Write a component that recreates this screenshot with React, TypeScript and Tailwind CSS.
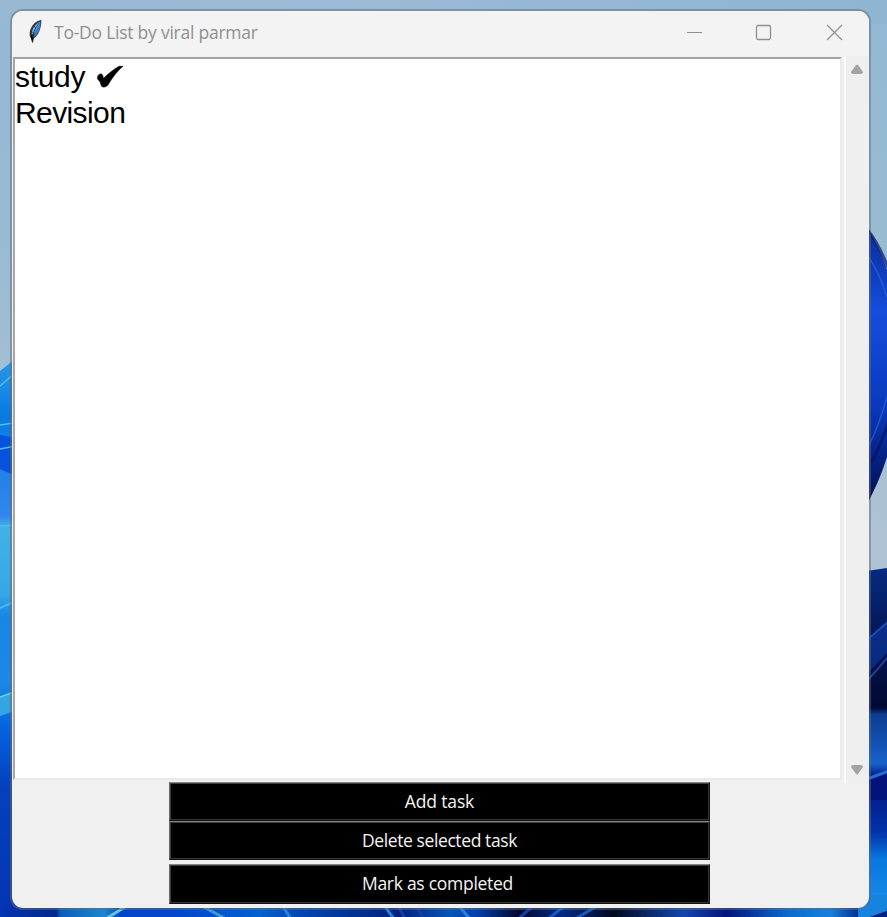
import React from "react";

function Wallpaper() {
  return (
    <svg className="absolute inset-0 h-[917px] w-[887px]" viewBox="0 0 887 917" preserveAspectRatio="none" aria-hidden="true">
      <defs>
        <linearGradient id="sky" x1="0" y1="0" x2="0" y2="1">
          <stop offset="0" stopColor="#94b9d4" />
          <stop offset="0.25" stopColor="#98bbd2" />
          <stop offset="0.6" stopColor="#afc3d4" />
        </linearGradient>
        <linearGradient id="topSky" x1="0" y1="0" x2="1" y2="0">
          <stop offset="0" stopColor="#98b9d3" />
          <stop offset="0.4" stopColor="#9bbad6" />
          <stop offset="1" stopColor="#8fb5d1" />
        </linearGradient>
        <linearGradient id="leftBase" x1="0" y1="360" x2="0" y2="917" gradientUnits="userSpaceOnUse">
          <stop offset="0" stopColor="#2a98e8" />
          <stop offset="0.1" stopColor="#087be0" />
          <stop offset="0.28" stopColor="#3287ec" />
          <stop offset="0.3" stopColor="#41b2e7" />
          <stop offset="0.42" stopColor="#37a7e5" />
          <stop offset="0.46" stopColor="#1986e5" />
          <stop offset="0.58" stopColor="#1d87e5" />
          <stop offset="0.66" stopColor="#0562df" />
          <stop offset="0.77" stopColor="#0440bd" />
          <stop offset="1" stopColor="#0434b2" />
        </linearGradient>
        <linearGradient id="rightPetal" x1="0" y1="230" x2="0" y2="502" gradientUnits="userSpaceOnUse">
          <stop offset="0" stopColor="#0a2c99" />
          <stop offset="0.3" stopColor="#154ddc" />
          <stop offset="0.65" stopColor="#0a39bd" />
          <stop offset="1" stopColor="#020d51" />
        </linearGradient>
        <linearGradient id="rightBase" x1="0" y1="568" x2="0" y2="917" gradientUnits="userSpaceOnUse">
          <stop offset="0" stopColor="#062b80" />
          <stop offset="0.22" stopColor="#041451" />
          <stop offset="0.4" stopColor="#020a32" />
          <stop offset="0.42" stopColor="#0c3d91" />
          <stop offset="0.56" stopColor="#1862ca" />
          <stop offset="0.6" stopColor="#02127b" />
          <stop offset="0.76" stopColor="#0334ab" />
          <stop offset="0.83" stopColor="#0876de" />
          <stop offset="0.94" stopColor="#1688e7" />
          <stop offset="1" stopColor="#04196d" />
        </linearGradient>
        <linearGradient id="bottom" x1="0" y1="0" x2="1" y2="0">
          <stop offset="0" stopColor="#0434b2" />
          <stop offset="0.065" stopColor="#03288c" />
          <stop offset="0.07" stopColor="#0c5dbb" />
          <stop offset="0.12" stopColor="#1b87cf" />
          <stop offset="0.14" stopColor="#0445c8" />
          <stop offset="0.2" stopColor="#0446cc" />
          <stop offset="0.3" stopColor="#0560d0" />
          <stop offset="0.35" stopColor="#0345b0" />
          <stop offset="0.46" stopColor="#03217e" />
          <stop offset="0.52" stopColor="#0655b8" />
          <stop offset="0.55" stopColor="#0340ae" />
          <stop offset="0.6" stopColor="#02092d" />
          <stop offset="0.65" stopColor="#052a84" />
          <stop offset="0.71" stopColor="#02091f" />
          <stop offset="0.79" stopColor="#1446ae" />
          <stop offset="0.84" stopColor="#03147b" />
          <stop offset="0.91" stopColor="#0d6ace" />
          <stop offset="0.96" stopColor="#1481db" />
          <stop offset="1" stopColor="#041d80" />
        </linearGradient>
      </defs>
      <path fill="url(#sky)" d="M0 0h887v917H0z" />
      <path fill="url(#topSky)" d="M0 0h887v24H0z" />
      <path fill="url(#leftBase)" d="M0 371 20 355V917H0z" />
      <path fill="#0652dd" d="M0 435 20 439V478L0 469z" />
      <path fill="none" stroke="#51bdec" strokeWidth="1.5" d="M0 386 16 372M0 425 20 422M0 449 20 445M0 526 20 525M0 608 20 599" />
      <path fill="#35a5e2" d="M0 697 20 690V709L0 716z" />
      <path stroke="#66d2e9" strokeWidth="1.5" d="M0 697 20 690" />
      <path fill="url(#rightPetal)" d="M862 218Q878 243 887 270V457Q878 486 862 513z" />
      <path fill="none" stroke="#2966dc" strokeOpacity=".7" strokeWidth="1.5" d="M865 252Q880 272 889 303M868 447Q879 427 889 390" />
      <path fill="none" stroke="#041565" strokeOpacity=".7" strokeWidth="3" d="M869 466Q880 447 889 421M867 229Q879 244 889 270" />
      <path fill="url(#rightBase)" d="M860 572 887 568V917H860z" />
      <path fill="#0d369c" fillOpacity=".7" d="M867 639 887 622V653L867 674z" />
      <path fill="none" stroke="#2a62ca" strokeOpacity=".6" strokeWidth="2" d="M868 639 889 621M868 680 889 656" />
      <path fill="#02127b" d="M867 779 887 772V800H867z" />
      <path fill="none" stroke="#226ed6" strokeWidth="3" d="M867 779 889 771" />
      <path fill="url(#bottom)" d="M0 907h865v10H0z" />
      <g fill="none" strokeWidth="3">
        <path stroke="#66c3d4" d="m107 918 18-11" />
        <path stroke="#3f9bd4" d="m202 906 24 13" />
        <path stroke="#2583dc" d="m282 905 9 14M384 905l10 14M458 905l12 14" />
        <path stroke="#173caa" d="m398 905 7 14M416 905l8 14M518 919l14-12" />
        <path stroke="#1558c0" d="m548 919 18-14M575 919l22-13" />
      </g>
      <path fill="#1683df" d="M858 895h29v16l-17 6h-12z" />
      <path fill="#03227f" d="m887 911-17 6h17z" />
    </svg>
  );
}

function Feather() {
  return (
    <svg className="h-[25px] w-[18px] shrink-0" viewBox="0 0 18 25" aria-hidden="true">
      <path d="M15.4 1.1C9.4 1.6 4.6 7.5 3.7 13.2c-.4 2.9.2 5 1.6 6.2L6 23.8l1-.1.8-4.3c4.4-2.6 7.6-9.4 7.6-18.3z" fill="#343a42" />
      <path d="M13.8 2.7C9.9 4.5 7.2 8.1 6.1 12.2l-.3 3.4c4.6-3 7.4-6.4 8-12.9z" fill="#76aeea" />
      <path d="M14.5 3c-.2 6.5-2 11.3-6.3 15l.5-5.5z" fill="#3c7fd2" />
      <path d="M12.8 4.3C9.9 8.4 7.3 12.4 6.4 19.5M5 12l1.5 1.6M8 7l1.4 1.6" fill="none" stroke="#1a2838" strokeWidth=".8" />
      <path d="M5 15v4.5l1.2 2.7 1.3-3" fill="#080808" />
    </svg>
  );
}

function TitleBar() {
  return (
    <header className="flex h-[45px] shrink-0 bg-[#f3f3f3] text-[#8f8f8f]">
      <div className="flex flex-1 items-start pl-[14px] pt-2">
        <Feather />
        <h1 className="ml-[10px] whitespace-nowrap font-['Open_Sans',sans-serif] text-[17.5px] leading-[27px] tracking-[-0.24px]">To-Do List by viral parmar</h1>
      </div>
      <svg className="h-[45px] w-[188px] shrink-0" viewBox="0 0 188 45" fill="none" stroke="#8f8f8f" aria-hidden="true">
        <path d="M6 21.5h15" />
        <rect x="75.5" y="14.5" width="14" height="14" rx="1.7" strokeWidth="1.3" />
        <path d="m146 14 15 15m0-15-15 15" strokeWidth="1.2" />
      </svg>
    </header>
  );
}

function TaskList() {
  return (
    <div className="h-[723px] w-[829px] shrink-0 border-2 border-t-[#a3a3a3] border-r-[#eaeaea] border-b-[#eaeaea] border-l-[#aaa6aa] bg-white text-black">
      <ul className="font-['Liberation_Sans',Arial,sans-serif] text-[30px] leading-[36px]">
        <li className="flex h-9 items-start">
          <span className="w-[71px] tracking-[-0.3px]">study</span>
          <svg className="ml-[11px] h-9 w-[27px] shrink-0" viewBox="0 0 27 36" role="img" aria-label="completed">
            <path d="M.5 18.8C.5 16.2 2.3 14.7 4 14.9c1.8.2 2 2.2 2.4 4.7C10.5 15 16.5 10.5 22 7.3h4c-5 4-11 11.8-14.3 17.5-1.2 2.3-3 3.3-5.3 3.3-2 0-2.3-1.7-3.1-4.6C2.2 20.8.5 21.3.5 18.8z" fill="#000" stroke="#000" strokeWidth=".6" />
          </svg>
        </li>
        <li className="h-9 tracking-[-0.6px]">Revision</li>
      </ul>
    </div>
  );
}

function Scrollbar() {
  return (
    <div className="flex h-[727px] w-[27px] shrink-0 flex-col items-center justify-between border-l-2 border-[#fafafa] bg-[#efefef] pt-[8px] pr-[3px] pb-[8px]">
      <svg className="h-[11px] w-3" viewBox="0 0 12 11" fill="#a3a3a3"><path d="M5 1q1-1 2 0l5 7q0 2-2 2H2q-2 0-2-2z" /></svg>
      <svg className="h-[11px] w-3" viewBox="0 0 12 11" fill="#a3a3a3"><path d="M5 10q1 1 2 0l5-7q0-2-2-2H2Q0 1 0 3z" /></svg>
    </div>
  );
}

function TaskButton({ children, className }: { children: string; className: string }) {
  return (
    <button className={"flex w-[541px] items-center justify-center whitespace-nowrap border border-t-[#858585] border-r-[#151515] border-b-[#111] border-l-[#686868] bg-black pb-[2px] font-['Open_Sans',sans-serif] text-[17.5px] leading-6 text-[#f4f4f4] shadow-[inset_1px_1px_0_#3d3d3d,inset_-1px_-1px_0_#333] " + className}>
      {children}
    </button>
  );
}

export default function App() {
  return (
    <main className="relative h-[917px] w-[887px] overflow-hidden">
      <Wallpaper />
      <div className="relative px-[10px] pt-[9px]">
        <section className="flex h-[901px] w-[861px] flex-col overflow-hidden rounded-[13px] border-2 border-[#606b73]/50 bg-[#f0f0f0] bg-clip-padding">
          <TitleBar />
          <div className="flex h-[727px] shrink-0">
            <div className="pl-px pt-[1px]"><TaskList /></div>
            <div className="ml-[2px]"><Scrollbar /></div>
          </div>
          <div className="flex flex-col items-start pl-[157px]">
            <TaskButton className="-mt-px h-[39px] tracking-[-0.15px]">Add task</TaskButton>
            <TaskButton className="h-[39px] tracking-[-0.4px]">Delete selected task</TaskButton>
            <TaskButton className="mt-1 h-10 pr-[4px] tracking-[-0.28px]">Mark as completed</TaskButton>
          </div>
        </section>
      </div>
    </main>
  );
}
